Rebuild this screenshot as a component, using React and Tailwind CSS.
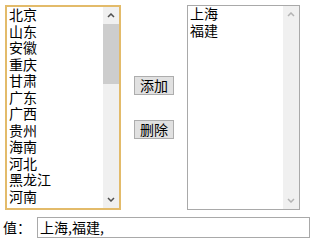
import React from "react";

const LEFT = ["北京", "山东", "安徽", "重庆", "甘肃", "广东", "广西", "贵州", "海南", "河北", "黑龙江", "河南"];
const RIGHT = ["上海", "福建"];

// small chevron used by the fake scrollbar buttons
function Chevron({ down, color }) {
  return (
    <svg width="8" height="5" viewBox="0 0 8 5" fill="none">
      <path
        d={down ? "M1 1 L4 4 L7 1" : "M1 4 L4 1 L7 4"}
        stroke={color}
        strokeWidth="1.5"
      />
    </svg>
  );
}

function ListBox({ items, focused }) {
  return (
    <div
      className={
        focused
          ? "flex w-[116px] h-[205px] border-2 border-[#e3bb6a] bg-white"
          : "flex w-[113px] h-[205px] border border-[#a9a9a9] bg-white"
      }
    >
      <div className="flex-1 overflow-hidden pl-[2px] -mt-[1px]">
        {items.map((it) => (
          <div key={it} className="leading-[16.5px] h-[16.5px] whitespace-nowrap">
            {it}
          </div>
        ))}
      </div>
      {/* --- scrollbar --- */}
      <div className="flex flex-col w-[16px] bg-[#f0f0f0]">
        <div className="h-[17px] flex items-center justify-center">
          <Chevron color={focused ? "#505050" : "#b4b4b4"} />
        </div>
        {focused && <div className="h-[60px] bg-[#cdcdcd]" />}
        <div className="flex-1" />
        <div className="h-[17px] flex items-center justify-center">
          <Chevron down color={focused ? "#505050" : "#b4b4b4"} />
        </div>
      </div>
    </div>
  );
}

function Btn({ children }) {
  return (
    <button className="w-[40px] h-[19px] border border-[#adadad] bg-[#e1e1e1] text-[14px] leading-[17px] text-black">
      {children}
    </button>
  );
}

export default function App() {
  return (
    <div
      className="w-[318px] h-[245px] bg-white text-black text-[14px] pl-[5px] pt-[5px]"
      style={{ fontFamily: '"Noto Sans CJK SC", "Noto Sans", sans-serif' }}
    >
      <div className="flex">
        <ListBox items={LEFT} focused />
        <div className="flex flex-col justify-center gap-[25px] mx-[13px]">
          <Btn>添加</Btn>
          <Btn>删除</Btn>
        </div>
        <ListBox items={RIGHT} />
      </div>
      <div className="flex items-center mt-[7px] -ml-[2px]">
        <span className="leading-[21px] w-[34px]">值：</span>
        <div className="w-[273px] h-[21px] border border-[#a9a9a9] pl-[2px] leading-[19px]">
          上海,福建,
        </div>
      </div>
    </div>
  );
}
